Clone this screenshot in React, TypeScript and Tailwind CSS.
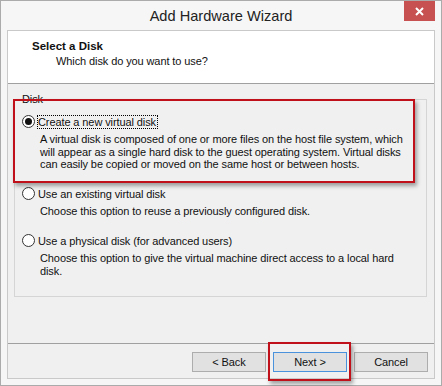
import type { ReactNode } from 'react';

function Radio({ checked }: { checked?: boolean }) {
  return (
    <svg width="13" height="13" viewBox="0 0 13 13" className="shrink-0">
      <circle cx="6.5" cy="6.5" r="6" fill="#ffffff" stroke="#333333" strokeWidth="1" />
      {checked && <circle cx="6.5" cy="6.5" r="3.5" fill="#111111" />}
    </svg>
  );
}

function Option({
  label,
  checked,
  focused,
  className,
  children,
}: {
  label: string;
  checked?: boolean;
  focused?: boolean;
  className?: string;
  children: ReactNode;
}) {
  return (
    <div className={className}>
      <div className="flex h-[14px] items-start">
        <Radio checked={checked} />
        <span
          className={`ml-[2px] whitespace-nowrap pr-px leading-[12px] ${
            focused ? 'border border-dotted border-black' : 'border border-transparent'
          }`}
        >
          {label}
        </span>
      </div>
      <p className="mt-[4px] ml-[18px] whitespace-nowrap leading-[12.5px]">{children}</p>
    </div>
  );
}

function DialogButton({ children, active }: { children: ReactNode; active?: boolean }) {
  return (
    <button
      type="button"
      className={`h-[20px] w-[74px] border bg-[#e1e1e1] text-center leading-[18px] text-[#111] ${
        active ? 'border-[#4a92dc]' : 'border-[#adadad]'
      }`}
    >
      {children}
    </button>
  );
}

export default function App() {
  return (
    <div className="relative flex h-[386px] w-[442px] flex-col border border-[#ababab] bg-[#f6f6f6] font-['Liberation_Sans',Arial,sans-serif] text-[11px] tracking-[-0.1px] text-[#111]">
      {/* title bar */}
      <div className="relative flex h-[29px] shrink-0 justify-center">
        <span className="mt-[5px] text-[14.6px] leading-[20px] tracking-normal text-[#222]">
          Add Hardware Wizard
        </span>
        <div className="absolute right-[6px] top-0 flex h-[20px] w-[31px] items-center justify-center bg-[#c75050]">
          <svg width="9" height="9" viewBox="0 0 9 9">
            <path d="M1 1L8 8M8 1L1 8" stroke="#ffffff" strokeWidth="2" />
          </svg>
        </div>
      </div>

      {/* client area */}
      <div className="mx-[6px] mb-[6px] flex flex-1 flex-col border border-[#c9c9c9]">
        <div className="h-[53px] shrink-0 border-b border-[#a0a0a0] bg-white pl-[24px] pt-[8px]">
          <div className="text-[11.5px] font-bold leading-[14px] tracking-normal">Select a Disk</div>
          <div className="mt-px pl-[24px] leading-[14px]">Which disk do you want to use?</div>
        </div>

        <div className="flex-1 bg-[#f0f0f0]">
          <fieldset className="mt-[8px] ml-[6px] mr-[7px] border border-[#d5d5d5] px-0 pb-[19px] pt-[9px]">
            <legend className="ml-[6px] px-px leading-[14px]">Disk</legend>
            <div className="pl-[7px]">
              <Option label="Create a new virtual disk" checked focused>
                A virtual disk is composed of one or more files on the host file system, which
                <br />
                will appear as a single hard disk to the guest operating system. Virtual disks
                <br />
                can easily be copied or moved on the same host or between hosts.
              </Option>
              <Option label="Use an existing virtual disk" className="mt-[16.5px]">
                Choose this option to reuse a previously configured disk.
              </Option>
              <Option label="Use a physical disk (for advanced users)" className="mt-[16.5px]">
                Choose this option to give the virtual machine direct access to a local hard
                <br />
                disk.
              </Option>
            </div>
          </fieldset>
        </div>

        <div className="flex h-[35px] shrink-0 justify-end gap-[7px] border-t border-[#a0a0a0] bg-[#f0f0f0] pr-[6px] pt-[8px]">
          <DialogButton>&lt; Back</DialogButton>
          <DialogButton active>Next &gt;</DialogButton>
          <DialogButton>Cancel</DialogButton>
        </div>
      </div>

      {/* red annotation frames */}
      <div className="pointer-events-none absolute left-[12px] top-[98px] h-[84px] w-[402px] border-2 border-[#c0101a] shadow-[2px_3px_4px_rgba(0,0,0,0.35)]" />
      <div className="pointer-events-none absolute left-[267px] top-[341px] h-[39px] w-[83px] border-2 border-[#c0101a] shadow-[2px_3px_4px_rgba(0,0,0,0.35)]" />
    </div>
  );
}
